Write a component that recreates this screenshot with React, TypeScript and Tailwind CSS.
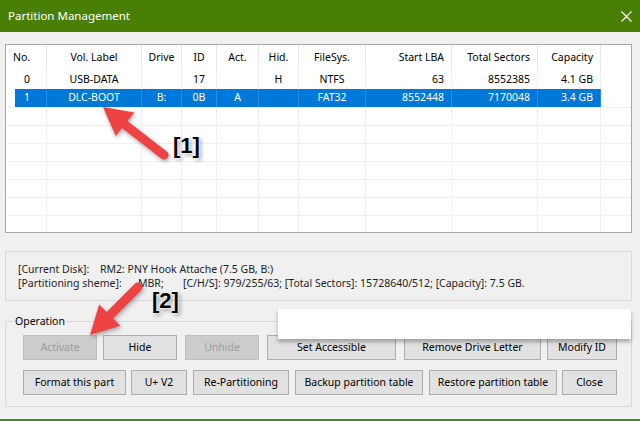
import React from 'react';

const columns = [
  { key: 'no', label: 'No.', head: 'w-[41px] justify-start pl-[7px]', cell: 'w-[32px] justify-start pl-[9px]' },
  { key: 'label', label: 'Vol. Label', head: 'w-[95px] justify-center', cell: 'w-[95px] justify-center' },
  { key: 'drive', label: 'Drive', head: 'w-[40px] justify-center', cell: 'w-[40px] justify-center' },
  { key: 'id', label: 'ID', head: 'w-[35px] justify-center', cell: 'w-[35px] justify-center' },
  { key: 'act', label: 'Act.', head: 'w-[42px] justify-center', cell: 'w-[42px] justify-center' },
  { key: 'hid', label: 'Hid.', head: 'w-[40px] justify-center', cell: 'w-[40px] justify-center' },
  { key: 'fs', label: 'FileSys.', head: 'w-[67px] justify-center', cell: 'w-[67px] justify-center' },
  { key: 'start', label: 'Start LBA', head: 'w-[86px] justify-end pr-[7px]', cell: 'w-[86px] justify-end pr-[7px]' },
  { key: 'total', label: 'Total Sectors', head: 'w-[86px] justify-end pr-[7px]', cell: 'w-[86px] justify-end pr-[7px]' },
  { key: 'cap', label: 'Capacity', head: 'w-[63px] justify-end pr-[7px]', cell: 'w-[63px] justify-end pr-[7px]' },
];

const partitions: Record<string, string>[] = [
  { no: '0', label: 'USB-DATA', drive: '', id: '17', act: '', hid: 'H', fs: 'NTFS', start: '63', total: '8552385', cap: '4.1 GB' },
  { no: '1', label: 'DLC-BOOT', drive: 'B:', id: '0B', act: 'A', hid: '', fs: 'FAT32', start: '8552448', total: '7170048', cap: '3.4 GB', selected: 'yes' },
];

const topButtons = [
  { label: 'Activate', cls: 'w-[74px]', disabled: true },
  { label: 'Hide', cls: 'w-[74px] ml-[6px]' },
  { label: 'Unhide', cls: 'w-[74px] ml-[8px]', disabled: true },
  { label: 'Set Accessible', cls: 'w-[129px] ml-[8px]' },
  { label: 'Remove Drive Letter', cls: 'w-[137px] ml-[8px]' },
  { label: 'Modify ID', cls: 'w-[70px] ml-[6px]' },
];

const bottomButtons = [
  { label: 'Format this part', cls: 'w-[103px]' },
  { label: 'U+ V2', cls: 'w-[56px] ml-[5px]' },
  { label: 'Re-Partitioning', cls: 'w-[96px] ml-[6px]' },
  { label: 'Backup partition table', cls: 'w-[128px] ml-[6px]' },
  { label: 'Restore partition table', cls: 'w-[128px] ml-[6px]' },
  { label: 'Close', cls: 'w-[55px] ml-[5px]' },
];

function WinButton({ label, cls, disabled }: { label: string; cls: string; disabled?: boolean }) {
  return (
    <div
      className={`h-[25px] flex items-center justify-center border ${cls} ${
        disabled ? 'bg-[#cccccc] border-[#bfbfbf] text-[#9d9d9d]' : 'bg-[#e1e1e1] border-[#adadad] text-black'
      }`}
    >
      {label}
    </div>
  );
}

export default function App() {
  return (
    <div className="relative w-[640px] h-[421px] overflow-hidden bg-[#f0f0f0] border-b-2 border-[#4e8a0e] font-['Noto_Sans',sans-serif] text-[10.5px] text-black">
      {/* title bar */}
      <div className="h-[32px] bg-[#4a7f05] flex items-center justify-between pl-[8px] pr-[7px] text-white">
        <span className="text-[11.5px]">Partition Management</span>
        <svg width="11" height="11" viewBox="0 0 11 11" className="mr-[1px]">
          <path d="M0.5 0.5 L10.5 10.5 M10.5 0.5 L0.5 10.5" stroke="#ffffff" strokeWidth="1.1" />
        </svg>
      </div>

      <div className="px-[5px] pt-[12px]">
        {/* partition list */}
        <div className="h-[189px] w-[627px] border border-[#a8a8a8] bg-white overflow-hidden">
          <div className="flex h-[26px]">
            {columns.map((c) => (
              <div key={c.key} className={`flex items-center border-r border-[#e8e8e8] ${c.head}`}>
                {c.label}
              </div>
            ))}
          </div>
          {partitions.map((p) => (
            <div key={p.no} className="flex h-[18px]">
              <div className="w-[9px]" />
              {columns.map((c) => (
                <div
                  key={c.key}
                  className={`flex items-center border-r ${c.cell} ${
                    p.selected ? 'bg-[#0078d7] text-white border-[#2a8ddd]' : 'border-[#f0f0f0]'
                  }`}
                >
                  {p[c.key]}
                </div>
              ))}
            </div>
          ))}
          {[0, 1, 2, 3, 4, 5, 6].map((r) => (
            <div key={r} className="flex h-[18px] border-t border-[#f0f0f0]">
              {columns.map((c) => (
                <div key={c.key} className={`border-r border-[#f0f0f0] ${c.head}`} />
              ))}
            </div>
          ))}
        </div>

        {/* disk info */}
        <div className="mt-[18px] h-[50px] w-[627px] border border-[#d8d8d8] flex flex-col justify-center pl-[12px] text-[#1e1e1e] leading-[14px]">
          <div className="flex">
            <span className="w-[82px]">[Current Disk]:</span>
            <span>RM2: PNY Hook Attache (7.5 GB, B:)</span>
          </div>
          <div className="flex">
            <span className="w-[120px]">[Partitioning sheme]:</span>
            <span className="w-[45px]">MBR;</span>
            <span>[C/H/S]: 979/255/63; [Total Sectors]: 15728640/512; [Capacity]: 7.5 GB.</span>
          </div>
        </div>

        {/* operations */}
        <fieldset className="mt-[13px] w-[627px] h-[93px] border border-[#d8d8d8] pt-[7px]">
          <legend className="ml-[8px] px-[1px] leading-[14px]">Operation</legend>
          <div className="flex pl-[17px]">
            {topButtons.map((b) => (
              <WinButton key={b.label} {...b} />
            ))}
          </div>
          <div className="flex pl-[17px] mt-[10px]">
            {bottomButtons.map((b) => (
              <WinButton key={b.label} {...b} />
            ))}
          </div>
        </fieldset>
      </div>

      {/* white cover box over the window */}
      <div className="absolute left-[278px] top-[309px] w-[353px] h-[30px] bg-white shadow-[0_3px_4px_rgba(0,0,0,0.3)]" />

      {/* annotation arrows */}
      <svg
        width="640"
        height="421"
        viewBox="0 0 640 421"
        className="absolute left-0 top-0 pointer-events-none drop-shadow-[1px_2px_2px_rgba(0,0,0,0.35)]"
      >
        <line x1="164" y1="155" x2="124" y2="124" stroke="#ef4343" strokeWidth="9" strokeLinecap="round" />
        <polygon points="103,107 134.3,112.5 115.7,136.1" fill="#ef4343" />
        <line x1="138" y1="287" x2="111" y2="314" stroke="#ef4343" strokeWidth="9" strokeLinecap="round" />
        <polygon points="90,335 99.2,304.6 120.4,325.8" fill="#ef4343" />
      </svg>

      <span className="absolute left-[173px] top-[135px] text-[22px] leading-none font-bold font-['Liberation_Sans',sans-serif] [text-shadow:0_0_2px_#fff,0_0_2px_#fff,0_0_3px_#fff,2px_2px_4px_rgba(0,0,0,0.45)]">
        [1]
      </span>
      <span className="absolute left-[152px] top-[290px] text-[22px] leading-none font-bold font-['Liberation_Sans',sans-serif] [text-shadow:0_0_2px_#fff,0_0_2px_#fff,0_0_3px_#fff,2px_2px_4px_rgba(0,0,0,0.45)]">
        [2]
      </span>
    </div>
  );
}
